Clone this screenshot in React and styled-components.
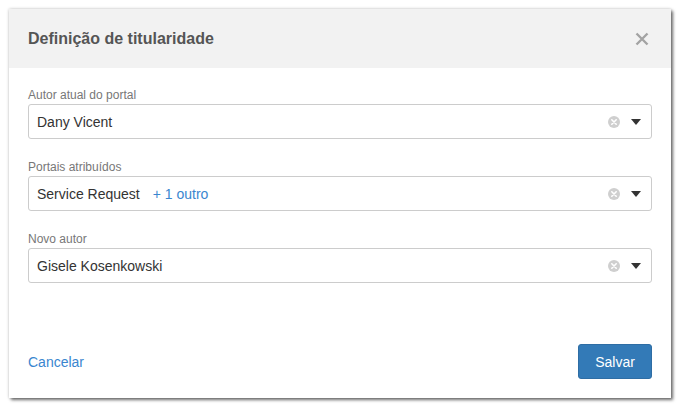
import React from "react"
import styled, { createGlobalStyle } from "styled-components"

const GlobalStyle = createGlobalStyle`
  body {
    margin: 0;
    background: #fff;
    font-family: "Liberation Sans", Arial, sans-serif;
  }
`

const fields = [
  { label: "Autor atual do portal", value: "Dany Vicent" },
  { label: "Portais atribuídos", value: "Service Request", extra: "+ 1 outro" },
  { label: "Novo autor", value: "Gisele Kosenkowski" },
]

function ClearIcon() {
  return (
    <svg width="12" height="12" viewBox="0 0 12 12">
      <circle cx="6" cy="6" r="6" fill="#cfcfcf" />
      <path d="M3.8 3.8 L8.2 8.2 M8.2 3.8 L3.8 8.2" stroke="#fff" strokeWidth="1.6" strokeLinecap="round" />
    </svg>
  )
}

function Caret() {
  return (
    <svg width="10" height="6" viewBox="0 0 10 6">
      <path d="M0 0 H10 L5 6 Z" fill="#333" />
    </svg>
  )
}

function CloseIcon() {
  return (
    <svg width="14" height="14" viewBox="0 0 14 14">
      <path d="M1.5 1.5 L12.5 12.5 M12.5 1.5 L1.5 12.5" stroke="#a3a3a3" strokeWidth="2.4" />
    </svg>
  )
}

export default function App() {
  return (
    <Page>
      <GlobalStyle />
      <Dialog>
        <Header>
          <Title>Definição de titularidade</Title>
          <CloseButton>
            <CloseIcon />
          </CloseButton>
        </Header>
        <Body>
          {fields.map((f) => (
            <Field key={f.label}>
              <Label>{f.label}</Label>
              <Select>
                <Value>
                  {f.value}
                  {f.extra && <Extra>{f.extra}</Extra>}
                </Value>
                <Controls>
                  <ClearIcon />
                  <Caret />
                </Controls>
              </Select>
            </Field>
          ))}
        </Body>
        <Footer>
          <CancelLink>Cancelar</CancelLink>
          <SaveButton>Salvar</SaveButton>
        </Footer>
      </Dialog>
    </Page>
  )
}

const Page = styled.div`
  padding: 9px;
`
const Dialog = styled.div`
  width: 662px;
  height: 389px;
  box-sizing: border-box;
  background: #fff;
  display: flex;
  flex-direction: column;
  box-shadow: 0 0 3px rgba(0, 0, 0, 0.22), 2px 2px 3px rgba(0, 0, 0, 0.55);
`
const Header = styled.div`
  height: 59px;
  flex-shrink: 0;
  background: #f2f2f2;
  display: flex;
  align-items: center;
  justify-content: space-between;
  padding: 0 22px 0 19px;
`
const Title = styled.h1`
  margin: 0;
  font-size: 16px;
  font-weight: bold;
  color: #555;
`
const CloseButton = styled.div`
  display: flex;
  align-items: center;
  cursor: pointer;
`
const Body = styled.div`
  padding: 20px 19px 0;
  display: flex;
  flex-direction: column;
  gap: 21px;
`
const Field = styled.div`
  display: flex;
  flex-direction: column;
`
const Label = styled.label`
  height: 16px;
  font-size: 12px;
  line-height: 14px;
  color: #777;
`
const Select = styled.div`
  height: 35px;
  box-sizing: border-box;
  border: 1px solid #ccc;
  border-radius: 3px;
  display: flex;
  align-items: center;
  justify-content: space-between;
  padding: 0 10px 0 8px;
`
const Value = styled.div`
  font-size: 14px;
  color: #333;
  display: flex;
  gap: 13px;
`
const Extra = styled.span`
  color: #3a86cf;
`
const Controls = styled.div`
  display: flex;
  align-items: center;
  gap: 11px;
`
const Footer = styled.div`
  margin-top: auto;
  padding: 0 19px 19px;
  display: flex;
  align-items: center;
  justify-content: space-between;
`
const CancelLink = styled.a`
  font-size: 14px;
  color: #3a86cf;
  cursor: pointer;
`
const SaveButton = styled.button`
  width: 74px;
  height: 35px;
  background: #337ab7;
  border: 1px solid #2e6da4;
  border-radius: 3px;
  color: #fff;
  font-family: "Liberation Sans", Arial, sans-serif;
  font-size: 14px;
  cursor: pointer;
`
